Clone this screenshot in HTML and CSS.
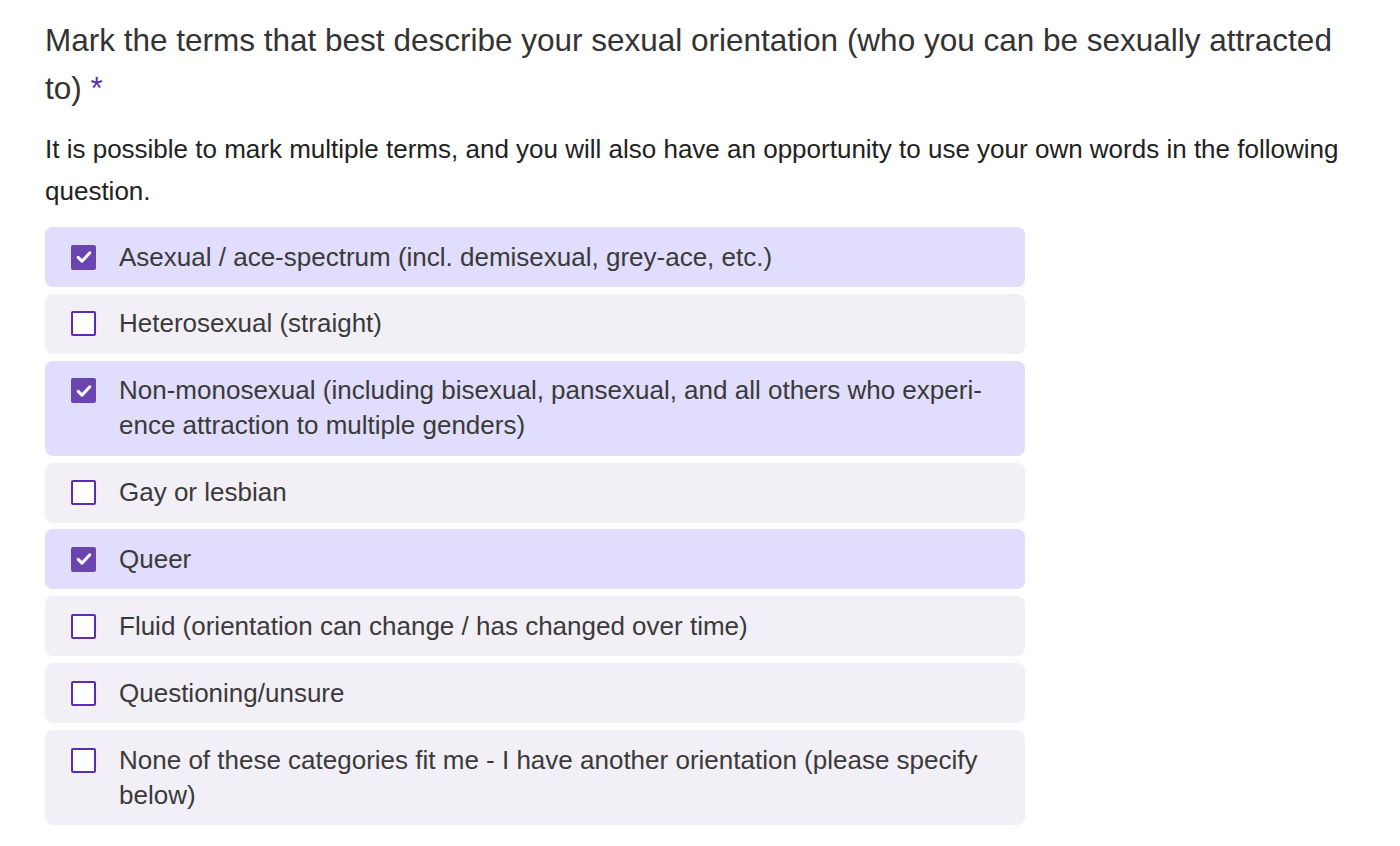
FILE: index.html
```html
<!DOCTYPE html>
<html lang="en">
<head>
<meta charset="utf-8">
<link rel="stylesheet" href="styles.css">
</head>
<body>
<div class="question">
  <h2 class="title">Mark the terms that best describe your sexual orientation (who you can be sexually attracted to) <span class="req">*</span></h2>
  <p class="desc">It is possible to mark multiple terms, and you will also have an opportunity to use your own words in the following question.</p>
  <div class="options">
    <label class="option checked"><span class="box"><svg viewBox="0 0 24 24"><path d="M5 12.5l4.5 4.5 9.5-10" /></svg></span><span class="text">Asexual / ace-spectrum (incl. demisexual, grey-ace, etc.)</span></label>
    <label class="option"><span class="box"></span><span class="text">Heterosexual (straight)</span></label>
    <label class="option checked"><span class="box"><svg viewBox="0 0 24 24"><path d="M5 12.5l4.5 4.5 9.5-10" /></svg></span><span class="text">Non-monosexual (including bisexual, pansexual, and all others who experi&shy;ence attraction to multiple genders)</span></label>
    <label class="option"><span class="box"></span><span class="text">Gay or lesbian</span></label>
    <label class="option checked"><span class="box"><svg viewBox="0 0 24 24"><path d="M5 12.5l4.5 4.5 9.5-10" /></svg></span><span class="text">Queer</span></label>
    <label class="option"><span class="box"></span><span class="text">Fluid (orientation can change / has changed over time)</span></label>
    <label class="option"><span class="box"></span><span class="text">Questioning/unsure</span></label>
    <label class="option"><span class="box"></span><span class="text">None of these categories fit me - I have another orientation (please specify below)</span></label>
  </div>
</div>
</body>
</html>
```
FILE: styles.css
```css
html, body {
  margin: 0;
  padding: 0;
  background: #ffffff;
}
body {
  font-family: "Liberation Sans", Arial, sans-serif;
  color: #333333;
}
.question {
  padding: 16px 45px 0 45px;
}
.title {
  margin: 0;
  font-size: 31.5px;
  font-weight: normal;
  line-height: 48px;
  color: #333333;
}
.req {
  color: #5a2db5;
}
.desc {
  margin: 16px 0 0 0;
  font-size: 26px;
  line-height: 42px;
  color: #222222;
}
.options {
  margin-top: 15px;
  width: 980px;
  display: flex;
  flex-direction: column;
  gap: 6.86px;
}
.option {
  display: flex;
  align-items: flex-start;
  gap: 23px;
  padding: 12.5px 26px;
  background: #f2eff7;
  border-radius: 8px;
}
.option.checked {
  background: #e0ddfd;
}
.box {
  flex: none;
  width: 25px;
  height: 25px;
  margin-top: 5px;
  box-sizing: border-box;
  border: 2px solid #5b2db6;
  border-radius: 2px;
  background: #ffffff;
  display: flex;
  align-items: center;
  justify-content: center;
}
.checked .box {
  background: #6a44b0;
  border-color: #6a44b0;
}
.box svg {
  width: 20px;
  height: 20px;
  fill: none;
  stroke: #ffffff;
  stroke-width: 3.6;
  stroke-linecap: round;
  stroke-linejoin: round;
}
.text {
  font-size: 26px;
  line-height: 35px;
  color: #3a3a3a;
  padding-right: 10px;
}
```
